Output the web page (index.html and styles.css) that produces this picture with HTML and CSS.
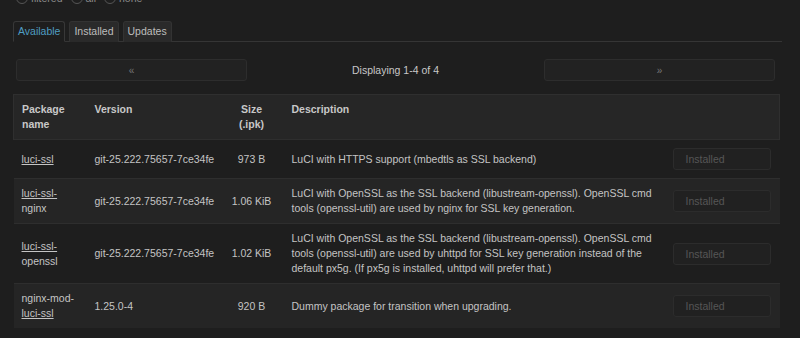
FILE: index.html
```html
<!DOCTYPE html>
<html lang="en">
<head>
  <meta charset="UTF-8">
  <meta name="viewport" content="width=device-width, initial-scale=1.0">
  <title>Software - Packages</title>
  <link rel="stylesheet" href="styles.css">
</head>
<body>
  <div class="page">
    <div class="radio-row">
      <label class="radio"><span class="dot"></span>filtered</label>
      <label class="radio"><span class="dot"></span>all</label>
      <label class="radio"><span class="dot"></span>none</label>
    </div>

    <ul class="tabs">
      <li class="tab active">Available</li>
      <li class="tab">Installed</li>
      <li class="tab">Updates</li>
    </ul>

    <div class="pager">
      <button class="pager-btn" disabled>&laquo;</button>
      <div class="pager-info">Displaying 1-4 of 4</div>
      <button class="pager-btn" disabled>&raquo;</button>
    </div>

    <table class="pkg-table">
      <colgroup>
        <col class="c-name">
        <col class="c-version">
        <col class="c-size">
        <col class="c-desc">
        <col class="c-action">
      </colgroup>
      <thead>
        <tr>
          <th>Package name</th>
          <th>Version</th>
          <th class="size">Size (.ipk)</th>
          <th>Description</th>
          <th></th>
        </tr>
      </thead>
      <tbody>
        <tr>
          <td><a href="#">luci-ssl</a></td>
          <td class="version">git-25.222.75657-7ce34fe</td>
          <td class="size">973 B</td>
          <td>LuCI with HTTPS support (mbedtls as SSL backend)</td>
          <td class="action"><button class="install-btn" disabled>Installed</button></td>
        </tr>
        <tr class="alt">
          <td><a href="#">luci-ssl-</a><br>nginx</td>
          <td class="version">git-25.222.75657-7ce34fe</td>
          <td class="size">1.06 KiB</td>
          <td>LuCI with OpenSSL as the SSL backend (libustream-openssl). OpenSSL cmd tools (openssl-util) are used by nginx for SSL key generation.</td>
          <td class="action"><button class="install-btn" disabled>Installed</button></td>
        </tr>
        <tr>
          <td><a href="#">luci-ssl-</a><br>openssl</td>
          <td class="version">git-25.222.75657-7ce34fe</td>
          <td class="size">1.02 KiB</td>
          <td>LuCI with OpenSSL as the SSL backend (libustream-openssl). OpenSSL cmd tools (openssl-util) are used by uhttpd for SSL key generation instead of the default px5g. (If px5g is installed, uhttpd will prefer that.)</td>
          <td class="action"><button class="install-btn" disabled>Installed</button></td>
        </tr>
        <tr class="alt">
          <td>nginx-mod-<br><a href="#">luci-ssl</a></td>
          <td class="version">1.25.0-4</td>
          <td class="size">920 B</td>
          <td>Dummy package for transition when upgrading.</td>
          <td class="action"><button class="install-btn" disabled>Installed</button></td>
        </tr>
      </tbody>
    </table>
  </div>
</body>
</html>
```

FILE: styles.css
```css
body {
  margin: 0;
  background-color: #1e1e1e;
  color: #c4c4c4;
  font-family: "Liberation Sans", Arial, sans-serif;
  font-size: 10.5px;
  line-height: 15px;
  overflow: hidden;
}
.page {
  width: 766px;
  padding-left: 13px;
}
.radio-row {
  display: flex;
  gap: 8px;
  height: 10px;
  margin-top: -7px;
  padding-left: 3px;
  color: #8a8a8a;
}
.radio {
  display: flex;
  align-items: center;
  gap: 3px;
}
.dot {
  display: inline-block;
  width: 10px;
  height: 10px;
  border: 1px solid #555;
  border-radius: 50%;
}
.tabs {
  display: flex;
  gap: 4px;
  list-style: none;
  margin: 18px 0 0;
  padding: 0;
  width: 769px;
  border-bottom: 1px solid #353535;
}
.tab {
  padding: 2px 4px;
  margin-bottom: -1px;
  background-color: #2a2a2a;
  border: 1px solid #333;
  border-bottom: none;
  border-radius: 3px 3px 0 0;
  color: #bdbdbd;
  font-size: 10.5px;
  line-height: 15px;
}
.tab.active {
  background-color: #1e1e1e;
  border-color: #383838;
  color: #4f9dc2;
  border-bottom: 1px solid #1e1e1e;
}
.pager {
  display: grid;
  grid-template-columns: 231px 1fr 231px;
  align-items: center;
  margin: 17px 4px 0 3px;
}
.pager-btn {
  height: 22px;
  background-color: #222;
  border: 1px solid #2d2d2d;
  border-radius: 3px;
  color: #777;
  font-family: inherit;
  font-size: 10px;
}
.pager-info {
  text-align: center;
  color: #c8c8c8;
}
.pkg-table {
  width: 766px;
  margin-top: 13px;
  border-collapse: collapse;
  table-layout: fixed;
}
.c-name { width: 73px; }
.c-version { width: 135px; }
.c-size { width: 62px; }
.c-desc { width: 385px; }
.c-action { width: 111px; }
.pkg-table th, .pkg-table td {
  padding: 7px 8px;
  text-align: left;
  vertical-align: middle;
}
.pkg-table th {
  vertical-align: top;
  background-color: #262626;
  color: #c8c8c8;
  font-weight: bold;
}
.pkg-table thead tr {
  border: 1px solid #2f2f2f;
  border-bottom: none;
}
.pkg-table tbody tr {
  border-top: 1px solid #2e2e2e;
}
.pkg-table tr.alt td {
  background-color: #252525;
}
.pkg-table .version {
  white-space: nowrap;
}
.pkg-table .size {
  text-align: center;
  padding-left: 7px;
  padding-right: 9px;
}
.pkg-table td.action {
  padding-left: 0;
  padding-right: 9px;
}
.pkg-table a {
  color: #c4c4c4;
}
.install-btn {
  display: block;
  width: 98px;
  height: 22px;
  margin: 1px 0 1px auto;
  padding-left: 12px;
  background-color: #212121;
  border: 1px solid #2c2c2c;
  border-radius: 3px;
  color: #565656;
  font-family: inherit;
  font-size: 10.5px;
  text-align: left;
}
```
